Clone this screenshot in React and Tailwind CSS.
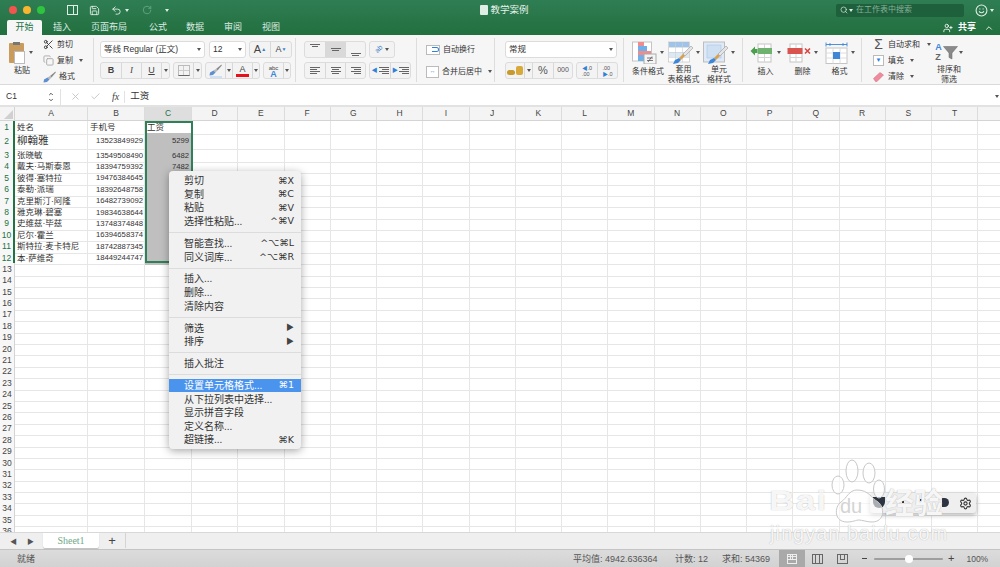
import React from "react";
import { Scissors, Copy, Save, Undo2, RotateCw, Search, Smile, Settings, UserPlus, ChevronUp, X, Check, ChevronUp as Up, ChevronDown as Down } from "lucide-react";

const columns = ["A","B","C","D","E","F","G","H","I","J","K","L","M","N","O","P","Q","R","S","T",""];
const rows = [
  ["姓名", "手机号", "工资"],
  ["柳翰雅", "13523849929", "5299"],
  ["张晓敏", "13549508490", "6482"],
  ["戴夫·马斯泰恩", "18394759392", "7482"],
  ["彼得·塞特拉", "19476384645", ""],
  ["泰勒·派瑞", "18392648758", ""],
  ["克里斯汀·阿隆", "16482739092", ""],
  ["雅克琳·碧塞", "19834638644", ""],
  ["史维兹·毕兹", "13748374848", ""],
  ["尼尔·霍兰", "16394658374", ""],
  ["斯特拉·麦卡特尼", "18742887345", ""],
  ["本·萨维奇", "18449244747", ""],
];
const gridCols = "grid grid-cols-[15px_73px_57px_47px_repeat(18,46.25px)]";
const menu = [
  [["剪切","⌘X"],["复制","⌘C"],["粘贴","⌘V"],["选择性粘贴...","^⌘V"]],
  [["智能查找...","^⌥⌘L"],["同义词库...","^⌥⌘R"]],
  [["插入..."],["删除..."],["清除内容"]],
  [["筛选","▶"],["排序","▶"]],
  [["插入批注"]],
  [["设置单元格格式...","⌘1"],["从下拉列表中选择..."],["显示拼音字段"],["定义名称..."],["超链接...","⌘K"]],
];

function Caret({ className = "" }) {
  return <span className={"shrink-0 w-0 h-0 border-x-[2px] border-x-transparent border-t-[3px] border-t-[#555] " + className} />;
}
function Seg({ w, children, on }) {
  return <div className={"h-full flex items-center justify-center border-r border-[#d8d8d8] last:border-r-0 text-[#444] " + (on ? "bg-[#d9d9d9] " : "") + w}>{children}</div>;
}
function Group({ children, className = "" }) {
  return <div className={"h-[17px] flex rounded-[3px] border border-[#dcdcdc] bg-[#f3f3f3] overflow-hidden " + className}>{children}</div>;
}
function Lines({ n = 3, align = "start" }) {
  const widths = ["w-full","w-2/3","w-full","w-2/3"];
  const a = align === "start" ? "items-start" : align === "end" ? "items-end" : "items-center";
  return <div className={"w-[10px] flex flex-col gap-[1px] " + a}>{widths.slice(0,n+1).map((x,i)=><span key={i} className={"h-px bg-[#666] " + x}/>)}</div>;
}
function Small({ children }) {
  return <span className="block text-[8px] leading-[9.5px] text-[#333] whitespace-nowrap">{children}</span>;
}
function Brush() {
  return (
    <g>
      <path d="M23 5 L15 13 L17 15 L25 7 Z" fill="#e4e4e4" stroke="#9a9a9a" strokeWidth="0.6" />
      <path d="M15 13 L11 17 L13 19 L17 15 Z" fill="#d9a04f" />
      <path d="M11 17 L7 19 L5 23 L10 22 L13 19 Z" fill="#3d86d8" />
    </g>
  );
}
function SheetLines() {
  return (
    <g stroke="#cfcfcf" strokeWidth="0.6">
      <path d="M1 6.5H21M1 11.5H21M1 16.5H21M7.5 1V21M14.5 1V21" />
      <rect x="0.5" y="1" width="21" height="20" fill="none" stroke="#bdbdbd" />
    </g>
  );
}
function CondIcon() {
  return (
    <svg width="26" height="23" viewBox="0 0 26 23">
      <rect x="0.5" y="1" width="19" height="19" fill="#fff" stroke="#c4c4c4" />
      <rect x="6" y="1" width="6" height="4" fill="#ee8d8d" />
      <rect x="6" y="5" width="9" height="5" fill="#6fb0ea" />
      <rect x="6" y="10" width="13" height="4" fill="#ee8d8d" />
      <rect x="6" y="14" width="7" height="6" fill="#6fb0ea" />
      <rect x="12" y="13" width="12" height="10" fill="#f5f5f5" stroke="#aaa" />
      <path d="M15 17H21M15 19.5H21M20 15.5L16 21" stroke="#444" strokeWidth="0.7" />
    </svg>
  );
}
function TableIcon() {
  return (
    <svg width="26" height="24" viewBox="0 0 26 24">
      <rect x="0.5" y="1" width="21" height="20" fill="#fff" />
      <rect x="1" y="1" width="20" height="5" fill="#9cc4ec" />
      <rect x="1" y="11" width="20" height="5" fill="#dbe9f6" />
      <SheetLines />
      <Brush />
    </svg>
  );
}
function StyleIcon() {
  return (
    <svg width="26" height="24" viewBox="0 0 26 24">
      <rect x="0.5" y="1" width="21" height="20" fill="#dfeaf6" />
      <rect x="4" y="4" width="14" height="13" fill="#cfe0f3" stroke="#a9c6e6" strokeWidth="0.6" />
      <rect x="0.5" y="1" width="21" height="20" fill="none" stroke="#bdbdbd" />
      <Brush />
    </svg>
  );
}
function InsertIcon() {
  return (
    <svg width="24" height="20" viewBox="0 0 24 20">
      <rect x="8" y="1" width="13" height="18" fill="#fff" stroke="#c4c4c4" />
      <path d="M14.5 1V19M8 14.5H21" stroke="#d4d4d4" />
      <rect x="8" y="5" width="14" height="6" fill="#6fb26f" />
      <path d="M0.5 8L5 3.5V6H7.5V10H5V12.5Z" fill="#4aa04f" />
    </svg>
  );
}
function DeleteIcon() {
  return (
    <svg width="24" height="20" viewBox="0 0 24 20">
      <rect x="3" y="1" width="12" height="18" fill="#fff" stroke="#c4c4c4" />
      <path d="M9 1V19M3 14.5H15" stroke="#d4d4d4" />
      <rect x="0.5" y="5" width="15" height="6" fill="#d9534f" />
      <path d="M18 5.5L23 10.5M23 5.5L18 10.5" stroke="#d9453f" strokeWidth="1.6" />
    </svg>
  );
}
function FormatIcon() {
  return (
    <svg width="23" height="22" viewBox="0 0 23 22">
      <path d="M1 2.5H22M1 0.5V4.5M22 0.5V4.5" stroke="#3d86d8" strokeWidth="0.9" fill="none" />
      <path d="M3 2.5L5.5 1V4ZM20 2.5L17.5 1V4Z" fill="#3d86d8" />
      <rect x="1" y="6" width="21" height="15.5" fill="#fff" stroke="#c4c4c4" />
      <path d="M8 6V21.5M15 6V21.5M1 11H22M1 16H22" stroke="#dcdcdc" />
      <rect x="8" y="10" width="7" height="7" fill="#3d86d8" />
    </svg>
  );
}
function PaintBrush() {
  return (
    <svg width="13" height="12" viewBox="0 0 13 12">
      <path d="M12.5 0.5L7 5L8.5 6.5L12.8 1.5Z" fill="#8a8a8a" />
      <path d="M7 5L4.5 6.5L6.5 8.5L8.5 6.5Z" fill="#b9b9b9" />
      <path d="M4.5 6.5L1 8.5L0.5 11.5L4 11L6.5 8.5Z" fill="#5f8fd0" />
    </svg>
  );
}

function TitleBar() {
  return (
    <div className="h-[35px] shrink-0 bg-gradient-to-b from-[#2f7d53] to-[#22703f] text-white relative">
      <div className="h-[20px] flex items-center pl-[9px]">
        <span className="w-[8px] h-[8px] rounded-full bg-[#f4544e]" />
        <span className="w-[8px] h-[8px] rounded-full bg-[#f8b62f] ml-[6px]" />
        <span className="w-[8px] h-[8px] rounded-full bg-[#2ec440] ml-[6px]" />
        <div className="ml-[22px] w-[11px] h-[10px] border border-[#dfeee5] flex justify-end"><span className="w-[4px] border-l border-[#dfeee5]"/></div>
        <Save size={11} className="ml-[11px] text-[#dfeee5]" />
        <Undo2 size={11} className="ml-[11px] text-[#dfeee5]" />
        <Caret className="ml-[3px] !border-t-[#dfeee5]" />
        <RotateCw size={10} className="ml-[13px] text-[#6ba888]" />
        <Caret className="ml-[13px] !border-t-[#dfeee5]" />
        <div className="flex-1 flex items-center justify-center">
          <div className="ml-[4px] flex items-center gap-[2px]">
            <span className="w-[8px] h-[10px] rounded-[1px] bg-[#dfeee5]" />
            <span className="text-[9.5px] text-[#e8f2ec]">教学案例</span>
          </div>
        </div>
        <div className="w-[128px] h-[13px] bg-[#1e5f3c] rounded-[2px] flex items-center pl-[4px] gap-[1px]">
          <Search size={8} className="text-[#dfeee5]" />
          <Caret className="!border-t-[#dfeee5]" />
          <span className="ml-[2px] text-[8px] text-[#86b29a]">在工作表中搜索</span>
        </div>
        <Smile size={13} className="ml-[11px] text-[#dfeee5]" />
        <Caret className="ml-[2px] mr-[6px] !border-t-[#dfeee5]" />
      </div>
      <div className="h-[15px] flex items-end text-[9px] text-[#dcebe2]">
        <div className="ml-[7px] w-[35px] h-[15px] bg-[#f6f6f6] text-[#217346] rounded-t-[2px] flex items-center justify-center">开始</div>
        <div className="ml-[11px] w-[19px] h-[15px] flex items-center">插入</div>
        <div className="ml-[19px] w-[38px] h-[15px] flex items-center">页面布局</div>
        <div className="ml-[20px] w-[19px] h-[15px] flex items-center">公式</div>
        <div className="ml-[18px] w-[19px] h-[15px] flex items-center">数据</div>
        <div className="ml-[19px] w-[19px] h-[15px] flex items-center">审阅</div>
        <div className="ml-[19px] w-[19px] h-[15px] flex items-center">视图</div>
        <div className="ml-auto h-[15px] flex items-center font-semibold text-white">
          <UserPlus size={10} />
          <span className="ml-[5px]">共享</span>
          <ChevronUp size={10} className="ml-[8px] mr-[6px]" />
        </div>
      </div>
    </div>
  );
}

function Ribbon() {
  const sep = "h-[44px] border-r border-[#dddddd] shrink-0";
  return (
    <div className="h-[50px] shrink-0 bg-[#f6f6f6] border-b border-[#dadada] flex pt-[3px]">
      {/* clipboard */}
      <div className={sep + " w-[94px] flex pl-[9px]"}>
        <div className="w-[34px] flex flex-col items-start">
          <div className="flex items-center mt-[3px] h-[23px]">
            <div className="w-[15px] h-[20px] bg-[#c99c5d] rounded-[1px] relative">
              <span className="absolute left-[4px] -top-[1px] w-[7px] h-[3px] bg-[#777]" />
              <span className="absolute left-[5px] top-[8px] w-[11px] h-[13px] bg-white border border-[#bbb]" />
            </div>
            <Caret className="ml-[5px]" />
          </div>
          <div className="ml-[5px] mt-[2px]"><Small>粘贴</Small></div>
        </div>
        <div className="flex flex-col gap-[5px] pt-[1px] text-[#444]">
          <div className="flex items-center gap-[3px] h-[11px]"><Scissors size={11} className="text-[#333]" /><Small>剪切</Small></div>
          <div className="flex items-center gap-[3px] h-[11px]"><Copy size={11} className="text-[#aaa]" /><Small>复制</Small><Caret className="ml-[3px]" /></div>
          <div className="flex items-center gap-[3px] h-[11px]"><PaintBrush /><Small>格式</Small></div>
        </div>
      </div>
      {/* font */}
      <div className={sep + " w-[202px] pl-[6px] pt-[3px] flex flex-col gap-[4px]"}>
        <div className="flex items-center h-[17px]">
          <div className="w-[105px] h-[17px] bg-white border border-[#dcdcdc] rounded-[3px] flex items-center justify-between px-[3px] text-[8.5px] text-[#333]">等线 Regular (正文)<Caret /></div>
          <div className="ml-[4px] w-[37px] h-[17px] bg-white border border-[#dcdcdc] rounded-[3px] flex items-center justify-between px-[3px] text-[8.5px] text-[#333]">12<Caret /></div>
          <Group className="ml-[3px] w-[43px]">
            <Seg w="w-[21px]"><span className="text-[11px] text-[#444]">A</span><span className="text-[5px] text-[#3d7fc4]">▲</span></Seg>
            <Seg w="flex-1"><span className="text-[9px] text-[#444]">A</span><span className="text-[5px] text-[#3d7fc4]">▼</span></Seg>
          </Group>
        </div>
        <div className="flex items-center h-[17px]">
          <Group className="w-[70px]">
            <Seg w="w-[21px]"><b className="text-[9px]">B</b></Seg>
            <Seg w="w-[20px]"><i className="text-[9px] font-['Liberation_Serif',serif]">I</i></Seg>
            <Seg w="w-[20px]"><u className="text-[9px]">U</u></Seg>
            <Seg w="flex-1"><Caret /></Seg>
          </Group>
          <Group className="ml-[3px] w-[29px]">
            <Seg w="w-[20px]"><div className="w-[12px] h-[11px] border border-[#bbb] border-b-[#666] grid grid-cols-2 grid-rows-2"><span className="border-r border-b border-[#ccc]"/><span className="border-b border-[#ccc]"/><span className="border-r border-[#ccc]"/></div></Seg>
            <Seg w="flex-1"><Caret /></Seg>
          </Group>
          <Group className="ml-[3px] w-[55px]">
            <Seg w="w-[20px]"><div className="flex flex-col items-center"><PaintBrush /><span className="w-[12px] h-[2px] bg-[#cfe0f3]"/></div></Seg>
            <Seg w="w-[7px]"><Caret /></Seg>
            <Seg w="w-[20px]"><div className="flex flex-col items-center leading-[10px]"><span className="text-[9px]">A</span><span className="w-[13px] h-[3px] bg-[#e8101c]"/></div></Seg>
            <Seg w="flex-1"><Caret /></Seg>
          </Group>
          <Group className="ml-[3px] w-[28px]">
            <Seg w="w-[20px]"><div className="flex flex-col items-center leading-[6px]"><span className="text-[6px]">abc</span><b className="text-[9px] text-[#3d86d8]">A</b></div></Seg>
            <Seg w="flex-1"><Caret /></Seg>
          </Group>
        </div>
      </div>
      {/* alignment */}
      <div className={sep + " w-[121px] pl-[8px] pt-[3px] flex flex-col gap-[4px]"}>
        <div className="flex h-[17px]">
          <Group className="w-[62px]">
            <Seg w="w-[21px]"><div className="h-[12px] flex items-start"><Lines n={1} align="center" /></div></Seg>
            <Seg w="w-[20px]" on><Lines n={1} align="center" /></Seg>
            <Seg w="flex-1"><div className="h-[12px] flex items-end"><Lines n={1} align="center" /></div></Seg>
          </Group>
          <Group className="ml-[3px] w-[26px]">
            <div className="flex-1 flex items-center justify-center gap-[3px]"><span className="text-[7px] text-[#3d7fc4] -rotate-45">ab</span><Caret /></div>
          </Group>
        </div>
        <div className="flex h-[17px]">
          <Group className="w-[62px]">
            <Seg w="w-[21px]"><Lines align="start" /></Seg>
            <Seg w="w-[20px]"><Lines align="center" /></Seg>
            <Seg w="flex-1"><Lines align="end" /></Seg>
          </Group>
          <Group className="ml-[3px] w-[42px]">
            <Seg w="w-[21px]"><span className="text-[6px] text-[#2f80d8] mr-[1px]">◀</span><Lines align="end" /></Seg>
            <Seg w="flex-1"><span className="text-[6px] text-[#2f80d8] mr-[1px]">▶</span><Lines align="end" /></Seg>
          </Group>
        </div>
      </div>
      {/* wrap */}
      <div className={sep + " w-[78px] pl-[9px] pt-[5px] flex flex-col gap-[9px]"}>
        <div className="flex items-center gap-[3px] h-[13px]">
          <div className="w-[14px] h-[10px] bg-white border border-[#bbb] flex items-center justify-end"><span className="w-[7px] h-[5px] border-y border-r border-[#2f80d8] rounded-r-[3px]"/></div>
          <Small>自动换行</Small>
        </div>
        <div className="flex items-center gap-[3px] h-[13px]">
          <div className="w-[13px] h-[12px] bg-white border border-[#bbb] flex items-center justify-center text-[6px] text-[#2f80d8]">↔</div>
          <Small>合并后居中</Small>
          <Caret className="ml-[3px]" />
        </div>
      </div>
      {/* number */}
      <div className={sep + " w-[129px] pl-[10px] pt-[3px] flex flex-col gap-[4px]"}>
        <div className="w-[112px] h-[17px] bg-white border border-[#dcdcdc] rounded-[3px] flex items-center justify-between px-[3px] text-[8.5px] text-[#333]">常规<Caret /></div>
        <div className="flex h-[17px]">
          <Group className="w-[68px]">
            <Seg w="w-[19px]"><div className="flex items-end gap-[1px]"><span className="w-[8px] h-[5px] rounded-full bg-[#c79a2e]"/><span className="w-[7px] h-[9px] rounded-[2px] bg-[#d6a93a]"/></div></Seg>
            <Seg w="w-[8px]"><Caret /></Seg>
            <Seg w="w-[21px]"><span className="text-[11px] text-[#555]">%</span></Seg>
            <Seg w="flex-1"><span className="text-[7px] text-[#555]">000</span></Seg>
          </Group>
          <Group className="ml-[3px] w-[42px]">
            <Seg w="w-[21px]"><div className="flex flex-col leading-[6px] text-[5.5px] text-[#555]"><span><span className="text-[#2f80d8]">◀</span>.0</span><span>.00</span></div></Seg>
            <Seg w="flex-1"><div className="flex flex-col leading-[6px] text-[5.5px] text-[#555]"><span>.00</span><span><span className="text-[#2f80d8]">▶</span>.0</span></div></Seg>
          </Group>
        </div>
      </div>
      {/* styles */}
      <div className={sep + " w-[119px] flex pl-[6px]"}>
        <div className="w-[36px] flex flex-col items-center pt-[3px]">
          <div className="flex items-center gap-[2px] h-[23px]"><CondIcon /><Caret /></div>
          <div className="mt-[3px]"><Small>条件格式</Small></div>
        </div>
        <div className="w-[35px] flex flex-col items-center pt-[3px]">
          <div className="flex items-center gap-[2px] h-[23px]"><TableIcon /><Caret /></div>
          <div className="mt-[1px] text-center"><Small>套用<br/>表格格式</Small></div>
        </div>
        <div className="w-[36px] flex flex-col items-center pt-[3px]">
          <div className="flex items-center gap-[2px] h-[23px]"><StyleIcon /><Caret /></div>
          <div className="mt-[1px] text-center"><Small>单元<br/>格样式</Small></div>
        </div>
      </div>
      {/* cells */}
      <div className={sep + " w-[119px] flex pl-[4px]"}>
        {[
          ["插入", <InsertIcon key="i" />],
          ["删除", <DeleteIcon key="d" />],
          ["格式", <FormatIcon key="f" />],
        ].map(([label, icon]) => (
          <div key={label} className="w-[37px] flex flex-col items-center pt-[3px]">
            <div className="flex items-center gap-[3px] h-[23px]">{icon}<Caret /></div>
            <div className="mt-[3px]"><Small>{label}</Small></div>
          </div>
        ))}
      </div>
      {/* editing */}
      <div className="flex pl-[11px]">
        <div className="w-[58px] flex flex-col gap-[5px] pt-[1px]">
          <div className="flex items-center gap-[4px] h-[11px]"><span className="w-[11px] text-center text-[14px] leading-[11px] text-[#555]">Σ</span><Small>自动求和</Small><Caret className="ml-[3px]" /></div>
          <div className="flex items-center gap-[4px] h-[11px]"><div className="w-[11px] h-[11px] bg-white border border-[#bbb] flex items-center justify-center text-[6px] text-[#2f80d8]">▼</div><Small>填充</Small><Caret className="ml-[2px]" /></div>
          <div className="flex items-center gap-[4px] h-[11px]">
            <svg width="11" height="11" viewBox="0 0 11 11"><path d="M0.5 7.5L7 1.5L10.5 4L4 10.5H2.5Z" fill="#ef8b9c" stroke="#c9687a" strokeWidth="0.5" /></svg>
            <Small>清除</Small><Caret className="ml-[2px]" />
          </div>
        </div>
        <div className="w-[36px] flex flex-col items-center pt-[2px]">
          <div className="flex items-center gap-[1px] h-[24px]">
            <div className="flex flex-col text-[9px] leading-[10px] font-semibold"><span className="text-[#3d86d8]">A</span><span className="text-[#666]">Z</span></div>
            <svg width="15" height="15" viewBox="0 0 15 15"><path d="M0.5 1.5H14.5L9 8V14L6 12.5V8Z" fill="#8a8a8a" stroke="#666" strokeWidth="0.5" /></svg>
            <Caret />
          </div>
          <div className="mt-[1px] text-center"><Small>排序和<br/>筛选</Small></div>
        </div>
      </div>
    </div>
  );
}

function FormulaBar() {
  return (
    <div className="h-[22px] shrink-0 bg-white border-b-2 border-[#e2e2e2] flex items-center text-[#333] pt-[3px]">
      <span className="w-[48px] pl-[6px] text-[8.5px]">C1</span>
      <div className="flex flex-col text-[#555]"><Up size={6} strokeWidth={4} /><Down size={6} strokeWidth={4} /></div>
      <span className="ml-[6px] h-[16px] border-l border-[#e2e2e2]" />
      <X size={11} className="ml-[9px] text-[#c4c4c4]" />
      <Check size={11} className="ml-[9px] text-[#c4c4c4]" />
      <i className="ml-[11px] text-[10px] font-['Liberation_Serif',serif] text-[#444]">fx</i>
      <span className="ml-[5px] h-[12px] border-l border-[#e2e2e2]" />
      <span className="ml-[5px] text-[9.5px]">工资</span>
      <Caret className="ml-auto mr-[1px]" />
    </div>
  );
}

function Grid() {
  const rowCount = 36;
  return (
    <div className="flex-1 min-h-0 overflow-hidden relative bg-white">
      <div className={gridCols + " h-[14px] bg-[#f4f4f4] border-b border-[#d4d4d4] text-[8.5px] text-[#444]"}>
        <div className="border-r border-[#d4d4d4] relative"><span className="absolute right-[1px] bottom-[1px] w-0 h-0 border-l-[9px] border-l-transparent border-b-[9px] border-b-[#d0d0d0]" /></div>
        {columns.map((c, n) => (
          <div key={n} className={"flex items-center justify-center border-r border-[#dcdcdc] " + (c === "C" ? "bg-[#dedede] text-[#217346]" : "")}>{c}</div>
        ))}
      </div>
      {Array.from({ length: rowCount }).map((_, i) => {
        const row = rows[i];
        const h = i === 0 ? "h-[12px]" : i === 1 ? "h-[16px]" : "h-[11.4px]";
        return (
          <div key={i} className={gridCols + " " + h + " text-[#333]"}>
            <div className={"flex items-center justify-center text-[8.5px] border-b border-[#e4e4e4] bg-[#f7f7f7] " + (row ? "text-[#217346] border-r-2 border-r-[#217346]" : "text-[#444] border-r border-r-[#d4d4d4]")}>{i + 1}</div>
            <div className={"border-r border-b border-[#e6e6e6] pl-[2px] flex items-center whitespace-nowrap " + (i === 1 ? "text-[10.5px]" : "text-[8.5px]")}>{row && row[0]}</div>
            <div className={"border-r border-b border-[#e6e6e6] flex items-center " + (i === 0 ? "pl-[2px] text-[8.5px]" : "justify-end pr-px text-[7.7px]")}>{row && row[1]}</div>
            <div className={"border-r border-b flex items-center " + (i === 0 ? "pl-[2px] text-[8.5px] border-[#e6e6e6]" : row ? "justify-end pr-[2px] text-[7.7px] bg-[#bfbfbf] border-[#bfbfbf]" : "border-[#e6e6e6]")}>{row && row[2]}</div>
            {columns.slice(3).map((c, n) => <div key={n} className="border-r border-b border-[#e6e6e6]" />)}
          </div>
        );
      })}
      {/* selected range outline */}
      <div className="absolute left-[145px] top-[14px] w-[48px] h-[142px] border-2 border-[#2f8058] pointer-events-none" />
      <ContextMenu />
    </div>
  );
}

function ContextMenu() {
  return (
    <div className="absolute left-[169px] top-[64px] w-[132px] h-[278px] bg-[#f1f1f1] rounded-[4px] shadow-[0_2px_8px_rgba(0,0,0,0.35)] pt-[3px] text-[10px] text-[#333]">
      {menu.map((group, g) => (
        <div key={g}>
          {g > 0 && <div className="h-[8.3px] flex items-center"><span className="w-full border-t border-[#dcdcdc]" /></div>}
          {group.map(([label, right]) => {
            const active = label === "设置单元格格式...";
            return (
              <div key={label} className={"h-[13.6px] pl-[15px] pr-[7px] flex items-center justify-between " + (active ? "bg-[#4b94ee] text-white" : "")}>
                <span>{label}</span>
                {right && <span className={right === "▶" ? "text-[8px] text-[#444]" : "text-[9.5px] font-['DejaVu_Sans',sans-serif]"}>{right}</span>}
              </div>
            );
          })}
        </div>
      ))}
    </div>
  );
}

function Watermark() {
  return (
    <>
      <div className="absolute left-[870px] top-[493px] w-[106px] h-[20px] bg-[#efefef] rounded-[3px] shadow-[0_2px_5px_rgba(0,0,0,0.3)] flex items-center justify-end pr-[4px]">
        <span className="absolute left-[3px] top-[4px] w-[12px] h-[11px] rounded-b-full bg-[#2b3440]" />
        <span className="absolute left-[32px] top-[8px] w-[2px] h-[2px] bg-[#333]" />
        <span className="absolute left-[50px] top-[6px] w-[2px] h-[2px] bg-[#333]" />
        <span className="absolute left-[72px] top-[5px] w-[7px] h-[9px] rounded-r-full bg-[#2b3440]" />
        <Settings size={13} className="text-[#333]" />
      </div>
      <div className="absolute left-[769px] top-[486px] origin-left scale-x-[1.3] text-[27px] leading-[30px] font-bold tracking-[1px] text-white/90 [text-shadow:0_0_1px_#a8a8a8]">Bai</div>
      <svg className="absolute left-[828px] top-[458px]" width="60" height="68" viewBox="0 0 60 68">
        <g fill="#ffffff" fillOpacity="0.6" stroke="#c8c8c8" strokeWidth="1">
          <ellipse cx="10" cy="27" rx="6" ry="9" />
          <ellipse cx="24" cy="13" rx="6" ry="11" />
          <ellipse cx="41" cy="15" rx="6" ry="10" />
          <ellipse cx="51" cy="31" rx="5.5" ry="9" />
          <path d="M29 32c-8 0-10 8-16 12-7 5-7 20 6 20 6 0 9-2 12-2s8 2 13 2c13 0 13-15 6-20-7-4-9-12-21-12z" />
        </g>
      </svg>
      <div className="absolute left-[840px] top-[494px] text-[20px] leading-[24px] text-[#d4d4d4]">du</div>
      <div className="absolute left-[885px] top-[484px] text-[29px] leading-[34px] font-bold text-white/90 [text-shadow:0_0_1px_#a0a0a0] font-['Noto_Sans_CJK_SC',sans-serif]">经验</div>
      <div className="absolute left-[770px] top-[522px] text-[20px] leading-[22px] tracking-[1px] text-white/90 [text-shadow:0_0_1px_#a0a0a0]">jingyan.baidu.com</div>
    </>
  );
}

function Footer() {
  return (
    <>
      <div className="h-[18px] shrink-0 bg-[#efefef] border-t border-[#d8d8d8] border-b border-b-[#c4c4c4] flex text-[#555]">
        <span className="ml-[10px] mt-[4px] text-[7px]">◀</span>
        <span className="ml-[10px] mt-[4px] text-[7px]">▶</span>
        <div className="ml-[9px] w-[56px] h-[15px] bg-white rounded-b-[2px] shadow-[0_1px_1px_rgba(0,0,0,0.2)] flex items-center justify-center text-[10px] text-[#6ea88a] font-['Liberation_Serif',serif]">Sheet1</div>
        <span className="w-[27px] h-[15px] border-r border-[#d4d4d4] flex items-center justify-center text-[13px] font-medium text-[#444]">+</span>
      </div>
      <div className="h-[17px] shrink-0 bg-gradient-to-b from-[#dcdcdc] to-[#d2d2d2] flex items-center text-[9px] text-[#555]">
        <span className="ml-[17px] w-[556px] pt-[3px]">就绪</span>
        <span className="w-[102px] pt-[3px]">平均值: 4942.636364</span>
        <span className="w-[47px] pt-[3px]">计数: 12</span>
        <span className="w-[57px] pt-[3px]">求和: 54369</span>
        <div className="w-[26px] h-full bg-[#a9a9a9] flex items-center justify-center">
          <div className="w-[10px] h-[10px] border border-[#eee] grid grid-cols-3 grid-rows-3"><span className="border-r border-b border-[#eee]"/><span className="border-r border-b border-[#eee]"/><span className="border-b border-[#eee]"/><span className="border-r border-b border-[#eee]"/><span className="border-r border-b border-[#eee]"/><span className="border-b border-[#eee]"/></div>
        </div>
        <div className="ml-[7px] w-[11px] h-[10px] border border-[#666] flex justify-center"><span className="w-[5px] h-full border-x border-[#666]" /></div>
        <div className="ml-[14px] w-[11px] h-[10px] border border-[#666] flex justify-center"><span className="w-[5px] h-[5px] border-x border-b border-[#666]" /></div>
        <span className="ml-[14px] w-[5px] border-t border-[#444]" />
        <div className="ml-[7px] w-[69px] h-[2px] bg-[#9e9e9e] rounded-full flex items-center justify-center">
          <span className="w-[8px] h-[8px] rounded-full bg-white" />
        </div>
        <span className="ml-[5px] text-[11px] text-[#444]">+</span>
        <span className="ml-[12px] text-[8.5px] pt-[2px]">100%</span>
      </div>
    </>
  );
}

export default function App() {
  return (
    <div className="w-[1000px] h-[567px] overflow-hidden flex flex-col relative font-['Liberation_Sans','Noto_Sans_CJK_SC',sans-serif]">
      <TitleBar />
      <Ribbon />
      <FormulaBar />
      <Grid />
      <Footer />
      <Watermark />
    </div>
  );
}
